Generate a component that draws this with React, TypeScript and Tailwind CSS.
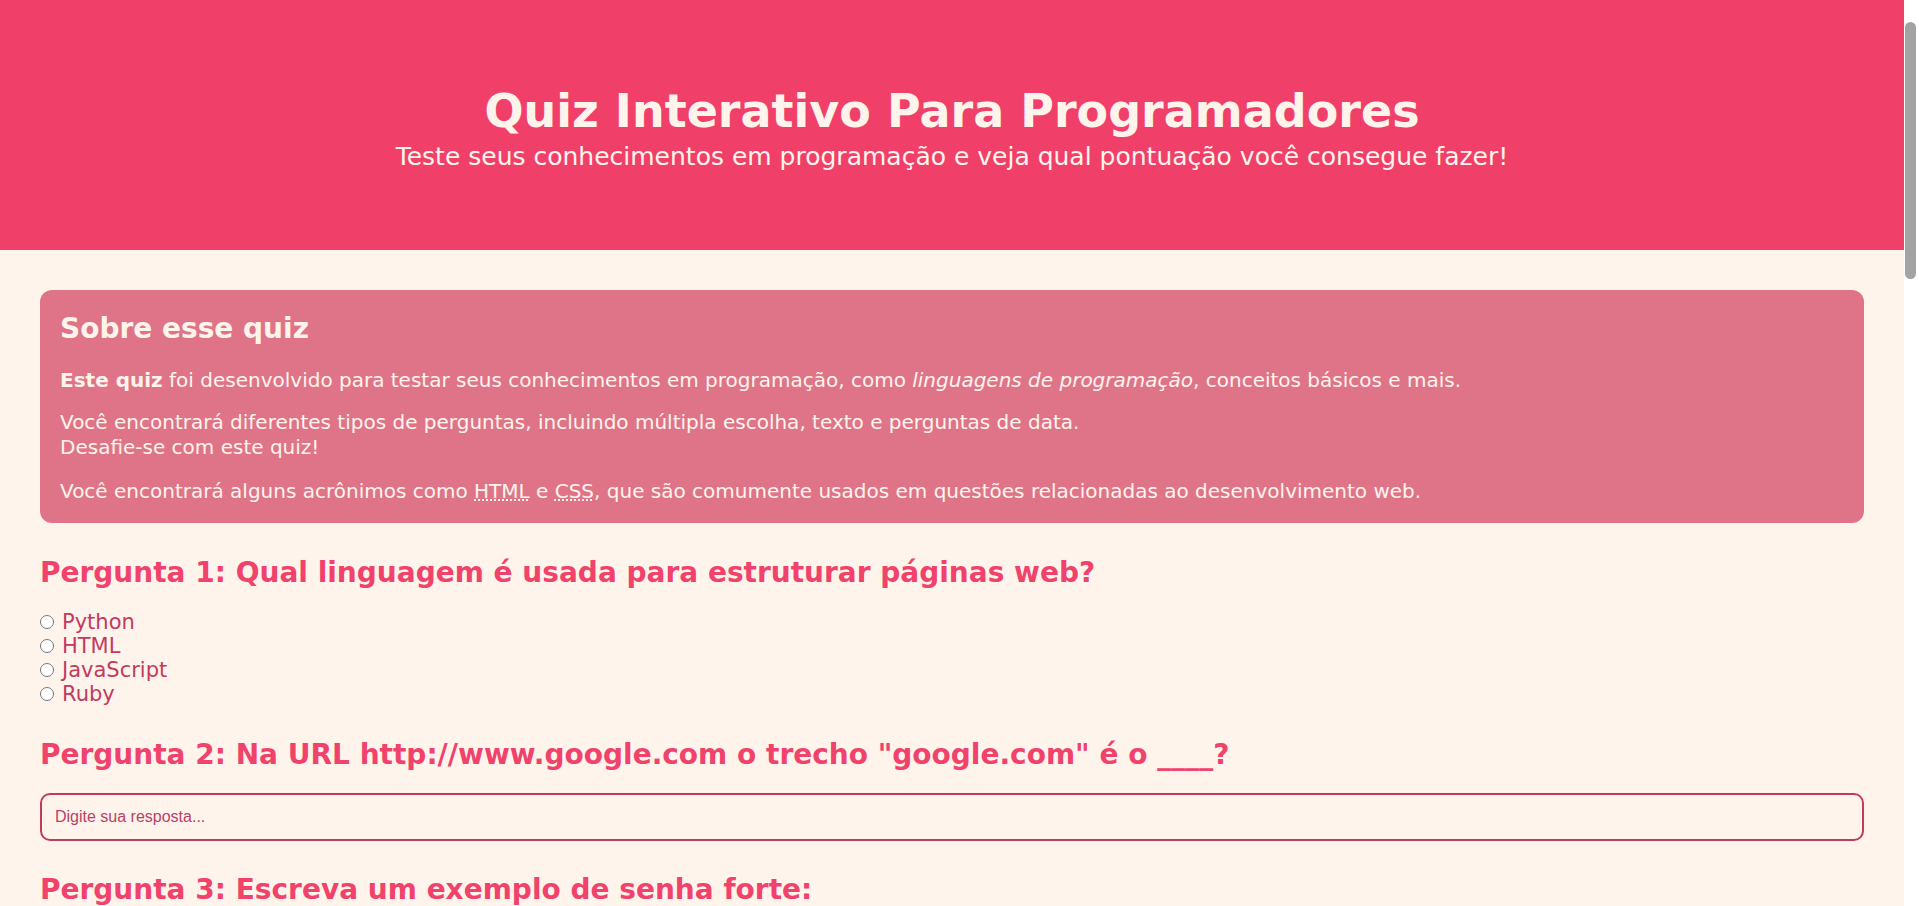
import { useState } from "react";

const options = ["Python", "HTML", "JavaScript", "Ruby"];

const Question = ({ title, children, first }: { title: string; children: React.ReactNode; first?: boolean }) => {
    return (
        <section className={first ? "mt-[31px]" : "mt-[30px]"}>
            <h2 className="text-[28px] leading-[38px] font-bold text-[#f0426b]">{title}</h2>
            {children}
        </section>
    );
};

const App = () => {
    const [answer, setAnswer] = useState("");

    return (
        <div className="h-screen flex bg-[#fff4ec] font-['DejaVu_Sans',sans-serif]">

            <div className="flex-1 overflow-y-auto [scrollbar-width:none] pb-16">

                {/* Header */}
                <header className="h-[250px] bg-[#f0406a] text-[#fff4ec] flex flex-col items-center pt-[82px]">
                    <h1 className="text-[46px] leading-[58px] font-bold">Quiz Interativo Para Programadores</h1>
                    <p className="mt-[2px] text-[25px] leading-[29px]">
                        Teste seus conhecimentos em programação e veja qual pontuação você consegue fazer!
                    </p>
                </header>

                <main className="mx-10">

                    {/* Sobre */}
                    <div className="mt-10 rounded-xl bg-[#df7489] text-[#fff4ec] px-5 pt-5 pb-[19px] text-[20px] leading-[25px]">
                        <h2 className="text-[28px] leading-[38px] font-bold">Sobre esse quiz</h2>
                        <p className="mt-5">
                            <strong>Este quiz</strong> foi desenvolvido para testar seus conhecimentos em programação, como{" "}
                            <em>linguagens de programação</em>, conceitos básicos e mais.
                        </p>
                        <p className="mt-[17px]">
                            Você encontrará diferentes tipos de perguntas, incluindo múltipla escolha, texto e perguntas de data.
                            <br />
                            Desafie-se com este quiz!
                        </p>
                        <p className="mt-[19px]">
                            Você encontrará alguns acrônimos como <abbr title="HyperText Markup Language">HTML</abbr> e{" "}
                            <abbr title="Cascading Style Sheets">CSS</abbr>, que são comumente usados em questões relacionadas ao
                            desenvolvimento web.
                        </p>
                    </div>

                    {/* Pergunta 1 */}
                    <Question first title="Pergunta 1: Qual linguagem é usada para estruturar páginas web?">
                        <div className="mt-[18px] flex flex-col text-[21px] leading-[24px] text-[#c23b5d]">
                            {options.map((opt) => (
                                <label key={opt} className="flex items-center">
                                    <input type="radio" name="q1" value={opt} className="w-[14px] h-[14px] mr-2" />
                                    {opt}
                                </label>
                            ))}
                        </div>
                    </Question>

                    {/* Pergunta 2 */}
                    <Question title='Pergunta 2: Na URL http://www.google.com o trecho "google.com" é o ____?'>
                        <input
                            type="text"
                            value={answer}
                            onChange={(e) => setAnswer(e.target.value)}
                            placeholder="Digite sua resposta..."
                            className="mt-[19px] block w-full h-[48px] rounded-[10px] border-2 border-[#c23b5d] bg-transparent px-[13px] font-['Liberation_Sans',Arial,sans-serif] text-[16px] text-[#c23b5d] placeholder:text-[#b93f64] outline-none"
                        />
                    </Question>

                    {/* Pergunta 3 */}
                    <Question title="Pergunta 3: Escreva um exemplo de senha forte:">
                        <input
                            type="password"
                            placeholder="Digite sua senha..."
                            className="mt-[19px] block w-full h-[48px] rounded-[10px] border-2 border-[#c23b5d] bg-transparent px-[13px] font-['Liberation_Sans',Arial,sans-serif] text-[16px] text-[#c23b5d] placeholder:text-[#b93f64] outline-none"
                        />
                    </Question>

                    {/* Pergunta 4 */}
                    <Question title="Pergunta 4: Em que ano foi lançada a primeira versão do JavaScript?">
                        <input
                            type="date"
                            className="mt-[19px] block h-[48px] rounded-[10px] border-2 border-[#c23b5d] bg-transparent px-[13px] font-['Liberation_Sans',Arial,sans-serif] text-[16px] text-[#c23b5d] outline-none"
                        />
                    </Question>

                    <button className="mt-8 rounded-[10px] bg-[#f0406a] px-8 py-3 text-[20px] font-bold text-[#fff4ec]">
                        Enviar respostas
                    </button>

                </main>
            </div>

            {/* Scrollbar track */}
            <div className="w-[15px] shrink-0 bg-white">
                <div className="mt-[22px] ml-[1px] h-[257px] w-[11px] rounded-full bg-[#a3a3a3]" />
            </div>

        </div>
    );
};

export default App;
